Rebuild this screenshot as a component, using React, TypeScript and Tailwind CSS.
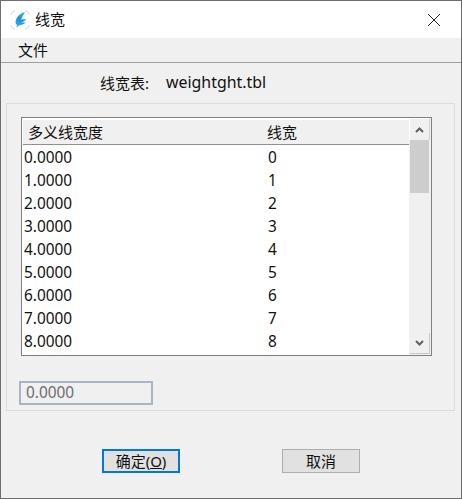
const rows = ['0', '1', '2', '3', '4', '5', '6', '7', '8']

function AppIcon() {
  return (
    <svg width="20" height="20" viewBox="0 0 20 20" className="shrink-0">
      <defs>
        <linearGradient id="feather" x1="0.8" y1="0" x2="0.3" y2="1">
          <stop offset="0" stopColor="#25c4c8" />
          <stop offset="0.5" stopColor="#1f8fe0" />
          <stop offset="1" stopColor="#22b8d8" />
        </linearGradient>
      </defs>
      <path d="M1 5 Q1 1 5 1 M15 1 Q19 1 19 5 M19 15 Q19 19 15 19 M5 19 Q1 19 1 15" fill="none" stroke="#dcdcdc" />
      <path
        d="M15 2 C11 3 7 6 6 10 C5 12 5.5 14 7 15 L6.5 17.5 L9 15.5 C11 15 14 14 16 12.5 L11 12.5 C13 12 15 10.5 16.5 9 L11 9.5 C12 7 14 4 15 2 Z"
        fill="url(#feather)"
      />
    </svg>
  )
}

export default function App() {
  return (
    <div
      className="flex h-[499px] w-[462px] flex-col border border-[#6e6e6e] bg-[#f0f0f0] text-[15px] text-[#111]"
      style={{ fontFamily: '"Noto Sans", "Noto Sans CJK SC", sans-serif' }}
    >
      {/* title bar */}
      <div className="flex h-[37px] shrink-0 items-center bg-white pl-[9px] pr-[20px]">
        <AppIcon />
        <span className="ml-[5px] leading-none">线宽</span>
        <svg width="14" height="14" viewBox="0 0 14 14" className="ml-auto">
          <path d="M1 1 L13 13 M13 1 L1 13" stroke="#222" strokeWidth="1" fill="none" />
        </svg>
      </div>

      {/* menu */}
      <div className="flex h-[25px] shrink-0 items-center border-b border-[#a0a0a0] bg-[#f0f0f0] pl-[17px]">
        <span className="leading-none">文件</span>
      </div>

      {/* file name */}
      <div className="flex h-[40px] shrink-0 items-center pl-[99px]">
        <span className="w-[66px] leading-none">线宽表:</span>
        <span className="text-[15.9px] leading-none">weightght.tbl</span>
      </div>

      {/* group box */}
      <div className="ml-[5px] flex h-[308px] w-[449px] shrink-0 flex-col border border-[#dcdcdc] px-[14px] pt-[13px]">
        <div className="flex h-[239px] w-[411px] shrink-0 border border-[#808080] bg-white">
          <div className="flex min-w-0 flex-1 flex-col pl-[1px] pt-[2px]">
            <div className="flex h-[25px] shrink-0 items-center border-b border-[#909090] bg-[#f0f0f0] pl-[5px]">
              <span className="w-[239px] leading-none">多义线宽度</span>
              <span className="leading-none">线宽</span>
            </div>
            <div className="flex flex-col pl-[1px] pt-[1px]">
              {rows.map((r) => (
                <div key={r} className="flex h-[23px] items-center text-[15.4px]">
                  <span className="w-[244px] leading-none">{r}.0000</span>
                  <span className="leading-none">{r}</span>
                </div>
              ))}
            </div>
          </div>
          {/* scrollbar */}
          <div className="flex w-[22px] shrink-0 flex-col bg-[#f0f0f0] pb-[1px] pr-[1px]">
            <div className="flex h-[22px] w-full items-center justify-center border-l border-r border-t border-l-white border-r-[#d4d4d4] border-t-white">
              <svg width="9" height="6" viewBox="0 0 9 6">
                <path d="M1 5 L4.5 1.5 L8 5" stroke="#606060" strokeWidth="2" fill="none" />
              </svg>
            </div>
            <div className="ml-[1px] h-[53px] w-[19px] bg-[#cdcdcd]" />
            <div className="mt-auto flex h-[21px] w-full items-center justify-center border-b border-l border-r border-b-[#c8c8c8] border-l-[#f0f0f0] border-r-[#c8c8c8]">
              <svg width="9" height="6" viewBox="0 0 9 6">
                <path d="M1 1 L4.5 4.5 L8 1" stroke="#606060" strokeWidth="2" fill="none" />
              </svg>
            </div>
          </div>
        </div>
        <div className="ml-[-2px] mt-[25px] flex h-[24px] w-[134px] items-center border-2 border-[#aab4c4] bg-[#f0f0f0] pl-[5px] text-[15.4px] leading-none text-[#6d6d6d]">
          0.0000
        </div>
      </div>

      {/* buttons */}
      <div className="flex pl-[101px] pt-[38px]">
        <button className="flex h-[24px] w-[78px] items-center justify-center border-2 border-[#0078d7] bg-[#e1e1e1] leading-none">
          确定(<span className="underline">O</span>)
        </button>
        <button className="ml-[102px] flex h-[24px] w-[78px] items-center justify-center border border-[#adadad] bg-[#e1e1e1] leading-none">
          取消
        </button>
      </div>
    </div>
  )
}
